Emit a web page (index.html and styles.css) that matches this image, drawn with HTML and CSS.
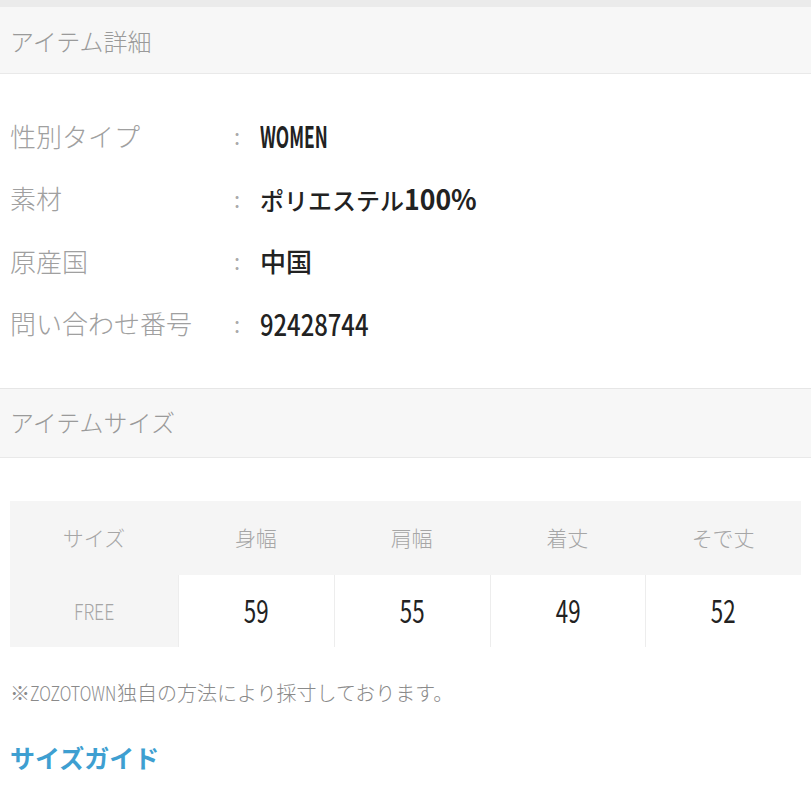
FILE: index.html
```html
<!DOCTYPE html>
<html lang="ja">
<head>
<meta charset="utf-8">
<link rel="stylesheet" href="styles.css">
</head>
<body>
<div class="topstrip"></div>
<div class="section-head">アイテム詳細</div>
<dl class="details">
  <div class="row"><dt>性別タイプ</dt><dd><span class="colon">:</span><span class="val"><span class="narrow n-word">WOMEN</span></span></dd></div>
  <div class="row"><dt>素材</dt><dd><span class="colon">:</span><span class="val kana">ポリエステル<span class="narrow n-pct">100%</span></span></dd></div>
  <div class="row"><dt>原産国</dt><dd><span class="colon">:</span><span class="val">中国</span></dd></div>
  <div class="row"><dt>問い合わせ番号</dt><dd><span class="colon">:</span><span class="val"><span class="narrow n-num">92428744</span></span></dd></div>
</dl>
<div class="section-head second">アイテムサイズ</div>
<div class="size-table">
  <div class="th">サイズ</div>
  <div class="th">身幅</div>
  <div class="th">肩幅</div>
  <div class="th">着丈</div>
  <div class="th">そで丈</div>
  <div class="tname"><span class="narrow n-free">FREE</span></div>
  <div class="td"><span class="narrow n-cell">59</span></div>
  <div class="td"><span class="narrow n-cell">55</span></div>
  <div class="td"><span class="narrow n-cell">49</span></div>
  <div class="td"><span class="narrow n-cell">52</span></div>
</div>
<p class="note">※<span class="narrow n-note">ZOZOTOWN</span>独自の方法により採寸しております。</p>
<a class="guide" href="#">サイズガイド</a>
</body>
</html>
```
FILE: styles.css
```css
html, body {
  margin: 0;
  padding: 0;
  background: #ffffff;
}
body {
  font-family: "Noto Sans CJK JP", "Noto Sans", sans-serif;
  color: #222;
  width: 811px;
}
.narrow {
  display: inline-block;
  transform-origin: left center;
}
.topstrip {
  height: 7px;
  background: #ebebeb;
}
.section-head {
  height: 67px;
  box-sizing: border-box;
  background: #f7f7f7;
  border-bottom: 1px solid #e9e9e9;
  padding-left: 10px;
  display: flex;
  align-items: center;
  font-size: 24px;
  color: #9a9a9a;
  font-weight: 300;
}
.section-head.second {
  height: 70px;
  padding-bottom: 4px;
  border-top: 1px solid #e6e6e6;
}
.details {
  margin: 0;
  padding: 30px 0 34px 0;
}
.row {
  display: flex;
  align-items: center;
  height: 62.5px;
}
.row dt {
  width: 224px;
  padding-left: 10px;
  font-size: 26px;
  color: #a0a0a0;
  font-weight: 300;
}
.row dd {
  margin: 0;
  display: flex;
  align-items: center;
}
.colon {
  width: 26px;
  color: #aaa;
  font-size: 22px;
}
.val {
  font-size: 26px;
  font-weight: 500;
  color: #222;
  white-space: nowrap;
}
.val.kana {
  font-size: 24px;
}
.n-word {
  font-size: 29px;
  font-weight: 600;
  transform: scaleX(0.6);
}
.n-num {
  font-size: 29px;
  font-weight: 500;
  transform: scaleX(0.82);
}
.n-pct {
  font-size: 28px;
  font-weight: 600;
  transform: scaleX(0.95);
}
.size-table {
  margin: 43px 10px 0 10px;
  display: grid;
  grid-template-columns: 168px repeat(4, 1fr);
  grid-template-rows: 74px 72px;
  background: #f5f5f5;
}
.th, .tname, .td {
  display: flex;
  align-items: center;
  justify-content: center;
}
.th {
  font-size: 21px;
  color: #a6a6a6;
  font-weight: 300;
  padding-bottom: 2px;
}
.tname {
  font-size: 22px;
  color: #a6a6a6;
  font-weight: 300;
  padding-bottom: 2px;
}
.n-free {
  transform: scaleX(0.8);
  transform-origin: center;
}
.td {
  background: #ffffff;
  border-left: 1px solid #ededed;
  color: #222;
  padding-bottom: 3px;
}
.n-cell {
  font-size: 31px;
  transform: scaleX(0.72);
  transform-origin: center;
}
.note {
  margin: 31px 0 0 0;
  padding-left: 10px;
  font-size: 20px;
  line-height: 30px;
  color: #8a8a8a;
  font-weight: 300;
  white-space: nowrap;
}
.n-note {
  font-size: 20px;
  transform: scaleX(0.8);
  margin-right: -21px;
}
.guide {
  display: block;
  margin-top: 34px;
  padding-left: 10px;
  font-size: 25px;
  line-height: 30px;
  font-weight: 700;
  color: #3e9fd1;
  text-decoration: none;
}
```
